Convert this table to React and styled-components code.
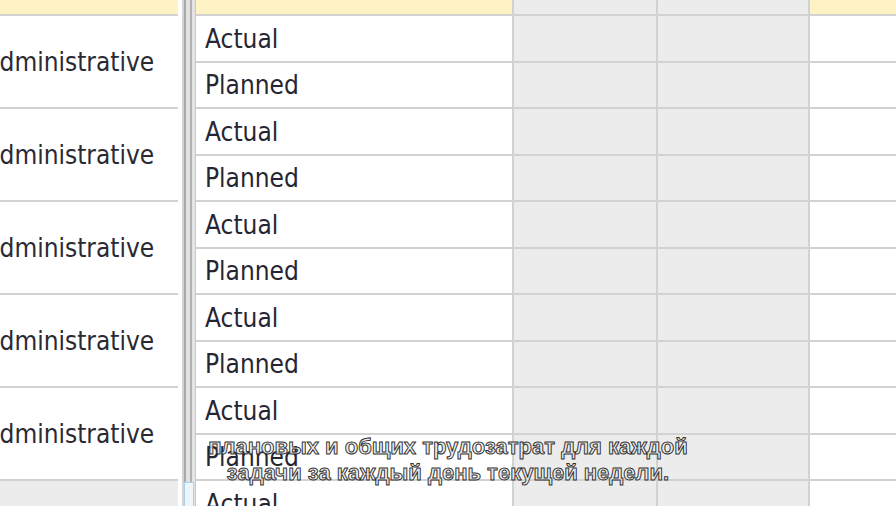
import React from 'react';
import styled, { createGlobalStyle } from 'styled-components';

const GlobalStyle = createGlobalStyle`
  *, *::before, *::after {
    box-sizing: border-box;
  }
  html, body {
    margin: 0;
    padding: 0;
    background: #ffffff;
    overflow: hidden;
  }
`;

const LINE = '#d2d2d2';
const GRAY = '#ececec';
const YELLOW = '#fdf3c4';

const Page = styled.div`
  position: relative;
  display: flex;
  width: 896px;
  height: 506px;
  overflow: hidden;
  font-family: "DejaVu Sans Condensed", "DejaVu Sans", sans-serif;
  font-stretch: condensed;
`;

/* left pane with the task names, scrolled a little to the right */
const LeftPane = styled.div`
  flex: 0 0 203px;
  margin-left: -25px;
  display: flex;
  flex-direction: column;
`;

const HeaderCell = styled.div`
  height: 16px;
  border-bottom: 2px solid ${LINE};
  background: ${props => (props.gray ? GRAY : YELLOW)};
  flex: ${props => (props.width ? `0 0 ${props.width}px` : '1 1 auto')};
  border-right: ${props => (props.edge ? `2px solid ${LINE}` : 'none')};
`;

const LeftHeader = styled.div`
  flex: 0 0 16px;
  border-bottom: 2px solid ${LINE};
  background: ${YELLOW};
`;

const GroupCell = styled.div`
  flex: 0 0 93px;
  display: flex;
  align-items: center;
  padding-left: 9px;
  border-bottom: 2px solid ${LINE};
  background: ${props => (props.gray ? GRAY : '#ffffff')};
  font-size: 26px;
  color: #2a2a33;
  white-space: nowrap;
`;

const Gap = styled.div`
  flex: 0 0 4px;
`;

const Splitter = styled.div`
  position: relative;
  flex: 0 0 14px;
  background: linear-gradient(
    to right,
    #d4d4d4 0px, #d4d4d4 2px,
    #a9a9a9 2px, #a9a9a9 4px,
    #e2e2e2 4px, #e2e2e2 8px,
    #b0b0b0 8px, #b0b0b0 10px,
    #e4e4e4 10px, #e4e4e4 13px,
    #c8c8c8 13px, #c8c8c8 14px
  );
`;

const SplitMarker = styled.div`
  position: absolute;
  left: 2px;
  top: 482px;
  width: 10px;
  height: 40px;
  border: 1px solid #a9d0ee;
  background: #eef5fb;
`;

const Grid = styled.div`
  flex: 1;
  display: flex;
  flex-direction: column;
`;

const HeadRow = styled.div`
  display: flex;
  flex: 0 0 16px;
`;

const Row = styled.div`
  display: flex;
  flex: 0 0 ${props => props.height}px;
  border-bottom: 2px solid ${LINE};
`;

const TypeCell = styled.div`
  flex: 0 0 318px;
  display: flex;
  align-items: center;
  padding-left: 9px;
  border-right: 2px solid ${LINE};
  font-size: 26px;
  color: #262633;
  background: #ffffff;
`;

const DayCell = styled.div`
  flex: 0 0 ${props => props.width}px;
  background: ${GRAY};
  border-right: 2px solid ${LINE};
`;

const TotalCell = styled.div`
  flex: 1;
  background: #ffffff;
`;

const Subtitle = styled.div`
  position: absolute;
  left: 0;
  right: 0;
  top: 434px;
  text-align: center;
  font-family: "Liberation Sans", Arial, sans-serif;
  font-weight: bold;
  font-size: 22px;
  line-height: 26px;
  color: rgba(232, 232, 232, 0.85);
  -webkit-text-stroke: 1px rgba(40, 40, 40, 0.95);
  pointer-events: none;
`;

const groups = [0, 1, 2, 3, 4];

function DataRow({ label, height }) {
  return (
    <Row height={height}>
      <TypeCell>{label}</TypeCell>
      <DayCell width={144} />
      <DayCell width={152} />
      <TotalCell />
    </Row>
  );
}

export default function App() {
  return (
    <>
      <GlobalStyle />
      <Page>
        <LeftPane>
          <LeftHeader />
          {groups.map(i => (
            <GroupCell key={i}>Administrative</GroupCell>
          ))}
          <GroupCell gray />
        </LeftPane>
        <Gap />
        <Splitter>
          <SplitMarker />
        </Splitter>
        <Grid>
          <HeadRow>
            <HeaderCell width={318} edge />
            <HeaderCell width={144} edge gray />
            <HeaderCell width={152} edge gray />
            <HeaderCell />
          </HeadRow>
          {groups.map(i => (
            <React.Fragment key={i}>
              <DataRow label="Actual" height={47} />
              <DataRow label="Planned" height={46} />
            </React.Fragment>
          ))}
          <DataRow label="Actual" height={47} />
        </Grid>
        <Subtitle>
          плановых и общих трудозатрат для каждой
          <br />
          задачи за каждый день текущей недели.
        </Subtitle>
      </Page>
    </>
  );
}
